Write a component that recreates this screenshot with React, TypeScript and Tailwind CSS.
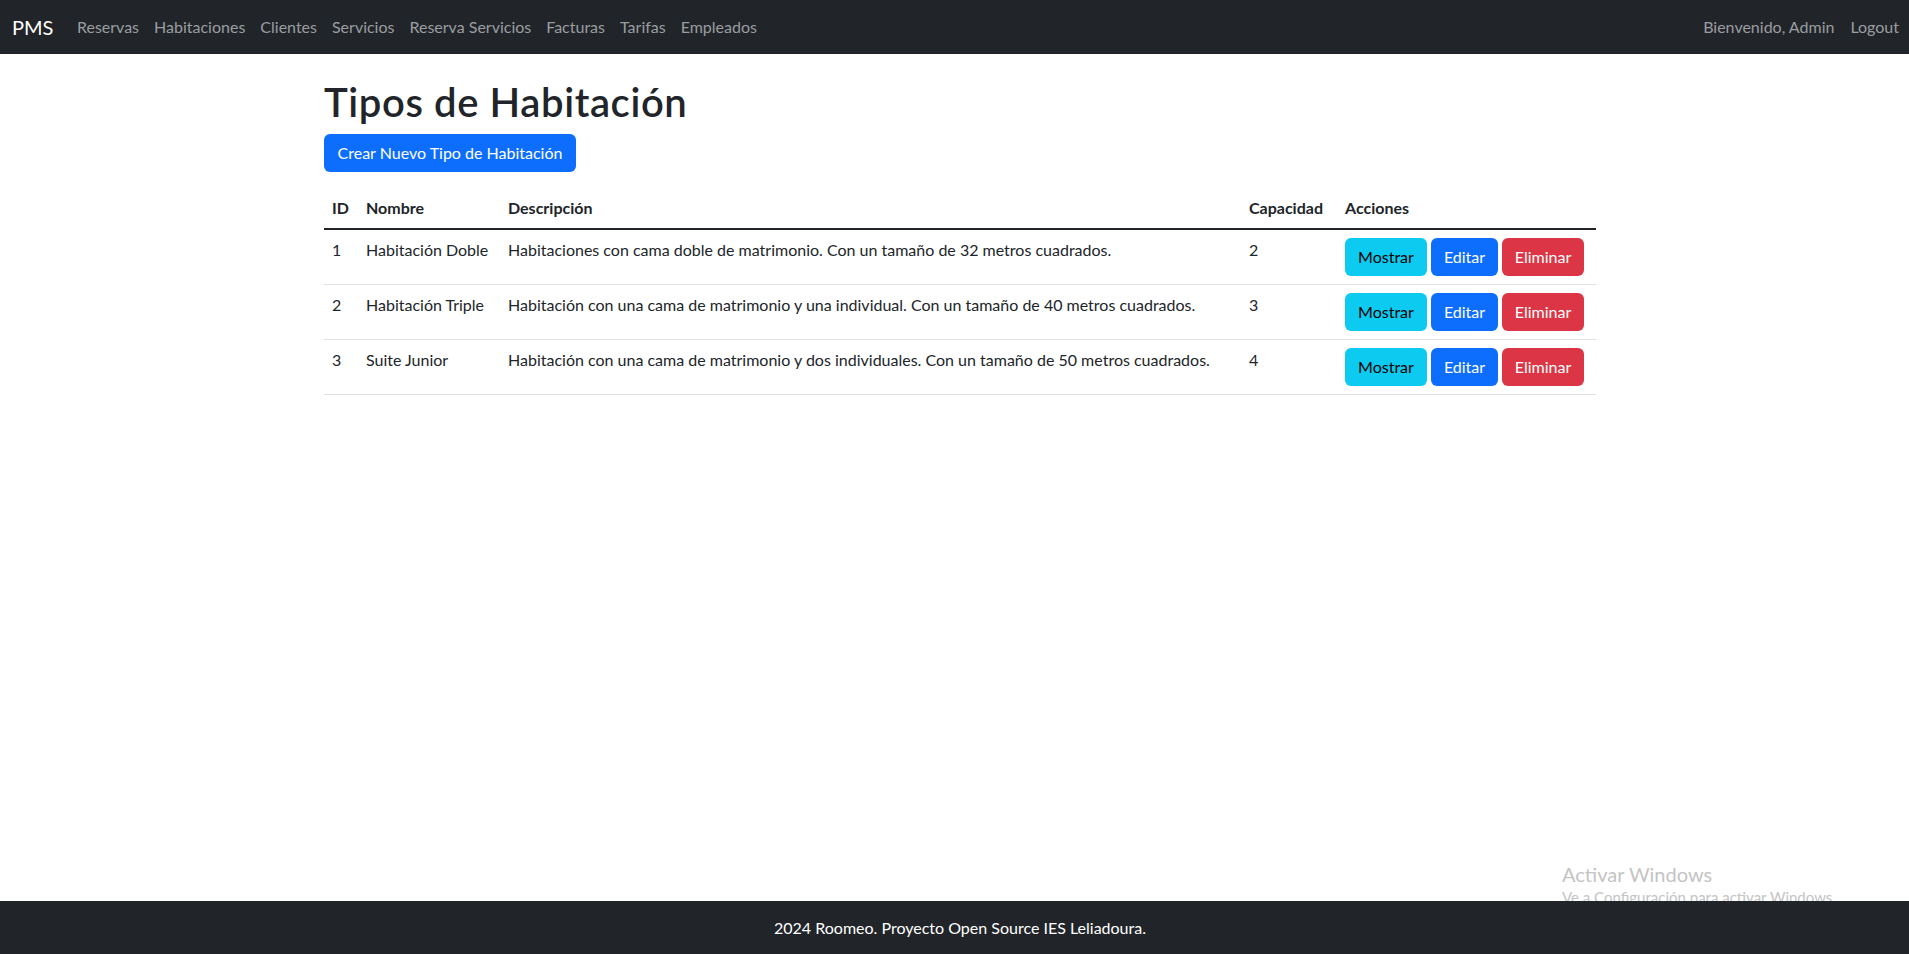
import React from "react";

const navLinks = [
  "Reservas",
  "Habitaciones",
  "Clientes",
  "Servicios",
  "Reserva Servicios",
  "Facturas",
  "Tarifas",
  "Empleados",
];

const tipos = [
  {
    id: 1,
    nombre: "Habitación Doble",
    descripcion: "Habitaciones con cama doble de matrimonio. Con un tamaño de 32 metros cuadrados.",
    capacidad: 2,
  },
  {
    id: 2,
    nombre: "Habitación Triple",
    descripcion: "Habitación con una cama de matrimonio y una individual. Con un tamaño de 40 metros cuadrados.",
    capacidad: 3,
  },
  {
    id: 3,
    nombre: "Suite Junior",
    descripcion: "Habitación con una cama de matrimonio y dos individuales. Con un tamaño de 50 metros cuadrados.",
    capacidad: 4,
  },
];

function Navbar() {
  return (
    <nav className="h-[54px] bg-[#212529] flex items-center justify-between pl-3 pr-[10px]">
      <div className="flex items-center">
        <span className="text-white text-[20px] leading-[30px] mr-4">PMS</span>
        {navLinks.map((link) => (
          <a key={link} className="px-[7.5px] text-[#9a9da0] text-base leading-6 cursor-pointer">
            {link}
          </a>
        ))}
      </div>
      <div className="flex items-center gap-4">
        <span className="text-[#9a9da0] text-base leading-6">Bienvenido, Admin</span>
        <a className="text-[#9a9da0] text-base leading-6 cursor-pointer">Logout</a>
      </div>
    </nav>
  );
}

function TiposTable() {
  return (
    <table className="mt-4 w-[1272px] table-fixed border-collapse text-left">
      <colgroup>
        <col className="w-[34px]" />
        <col className="w-[142px]" />
        <col className="w-[741px]" />
        <col className="w-[96px]" />
        <col className="w-[259px]" />
      </colgroup>
      <thead>
        <tr className="border-b-2 border-[#212529]">
          <th className="px-2 py-2 font-bold leading-6">ID</th>
          <th className="px-2 py-2 font-bold leading-6">Nombre</th>
          <th className="px-2 py-2 font-bold leading-6">Descripción</th>
          <th className="px-2 py-2 font-bold leading-6">Capacidad</th>
          <th className="px-2 py-2 font-bold leading-6">Acciones</th>
        </tr>
      </thead>
      <tbody>
        {tipos.map((t) => (
          <tr key={t.id} className="border-b border-[#dee2e6] align-top">
            <td className="px-2 py-2 leading-6">{t.id}</td>
            <td className="px-2 py-2 leading-6 whitespace-nowrap">{t.nombre}</td>
            <td className="px-2 py-2 leading-6">{t.descripcion}</td>
            <td className="px-2 py-2 leading-6">{t.capacidad}</td>
            <td className="px-2 py-2">
              <div className="flex gap-1">
                <button className="w-[82px] h-[38px] rounded-md bg-[#0dcaf0] text-black leading-6">Mostrar</button>
                <button className="w-[67px] h-[38px] rounded-md bg-[#0d6efd] text-white leading-6">Editar</button>
                <button className="w-[82px] h-[38px] rounded-md bg-[#dc3545] text-white leading-6">Eliminar</button>
              </div>
            </td>
          </tr>
        ))}
      </tbody>
    </table>
  );
}

export default function App() {
  return (
    <div className="relative min-h-screen flex flex-col bg-white text-[#212529] text-base font-['Lato',sans-serif]">
      <Navbar />

      <main className="flex-1 pl-[324px] pt-6">
        <h1 className="text-[40px] leading-[48px] font-semibold tracking-[0.6px] mb-2">Tipos de Habitación</h1>
        <button className="h-[38px] w-[252px] rounded-md bg-[#0d6efd] text-white leading-6">
          Crear Nuevo Tipo de Habitación
        </button>
        <TiposTable />
      </main>

      {/* Windows activation watermark */}
      <div className="absolute left-[1562px] top-[861px] text-[#c4c4c4] pointer-events-none">
        <div className="text-[20px] leading-[26px]">Activar Windows</div>
        <div className="text-[15px] leading-[20px]">Ve a Configuración para activar Windows.</div>
      </div>

      <footer className="relative z-10 h-[53px] bg-[#212529] text-white flex items-center justify-center pl-[11px]">
        2024 Roomeo. Proyecto Open Source IES Leliadoura.
      </footer>
    </div>
  );
}
